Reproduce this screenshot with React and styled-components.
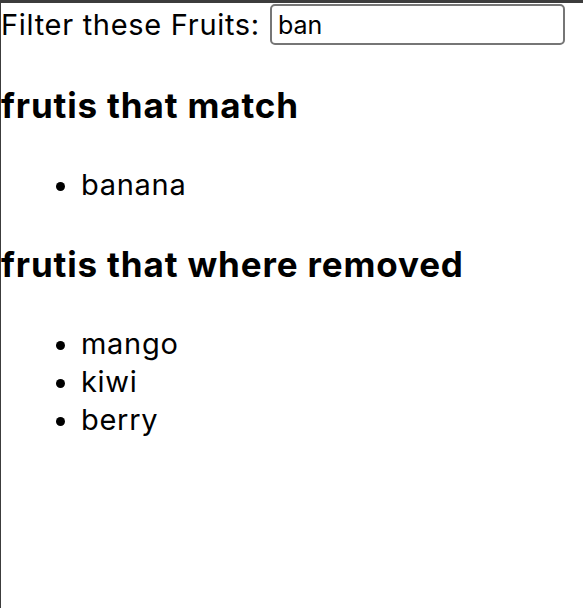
import React, { useState } from 'react'
import styled, { createGlobalStyle } from 'styled-components';

const fruits = ['banana', 'mango', 'kiwi', 'berry'];

function App() {
  const [query, setQuery] = useState('ban');

  const matching = fruits.filter((f) => f.includes(query));
  const removed = fruits.filter((f) => !f.includes(query));

  return (
    <Page>
      <GlobalStyle />
      <FilterRow>
        <Label htmlFor="filter">Filter these Fruits:</Label>
        <SearchInput
          id="filter"
          type="text"
          value={query}
          onChange={(e) => setQuery(e.target.value)}
        />
      </FilterRow>
      <Heading>frutis that match</Heading>
      <FruitList>
        {matching.map((f) => <li key={f}>{f}</li>)}
      </FruitList>
      <Heading>frutis that where removed</Heading>
      <FruitList>
        {removed.map((f) => <li key={f}>{f}</li>)}
      </FruitList>
    </Page>
  )
}

export default App

const GlobalStyle = createGlobalStyle`
  body {
    margin: 0;
    background: #fff;
    font-family: Inter, "Noto Sans", sans-serif;
    color: #000;
  }
`;

const Page = styled.div`
  min-height: 100vh;
  box-sizing: border-box;
  border-top: 3px solid #3c3c3c;
  border-left: 1px solid #3c3c3c;
  padding-top: 1px;
  overflow: hidden;
`;

const FilterRow = styled.div`
  display: flex;
  align-items: center;
  gap: 10px;
`;

const Label = styled.label`
  font-size: 29px;
  letter-spacing: 0.7px;
  line-height: 38px;
`;

const SearchInput = styled.input`
  width: 295px;
  height: 41px;
  box-sizing: border-box;
  border: 2px solid #767676;
  border-radius: 5px;
  padding: 0 6px;
  font-family: Inter, "Noto Sans", sans-serif;
  font-size: 25px;
  color: #000;
  outline: none;
`;

const Heading = styled.h2`
  font-size: 35px;
  font-weight: 700;
  letter-spacing: 0.85px;
  line-height: 41px;
  margin: 40px 0;
`;

const FruitList = styled.ul`
  margin: 40px 0;
  padding-left: 80px;
  font-size: 29px;
  letter-spacing: 0.7px;
  line-height: 38px;
  list-style: disc;
`;
